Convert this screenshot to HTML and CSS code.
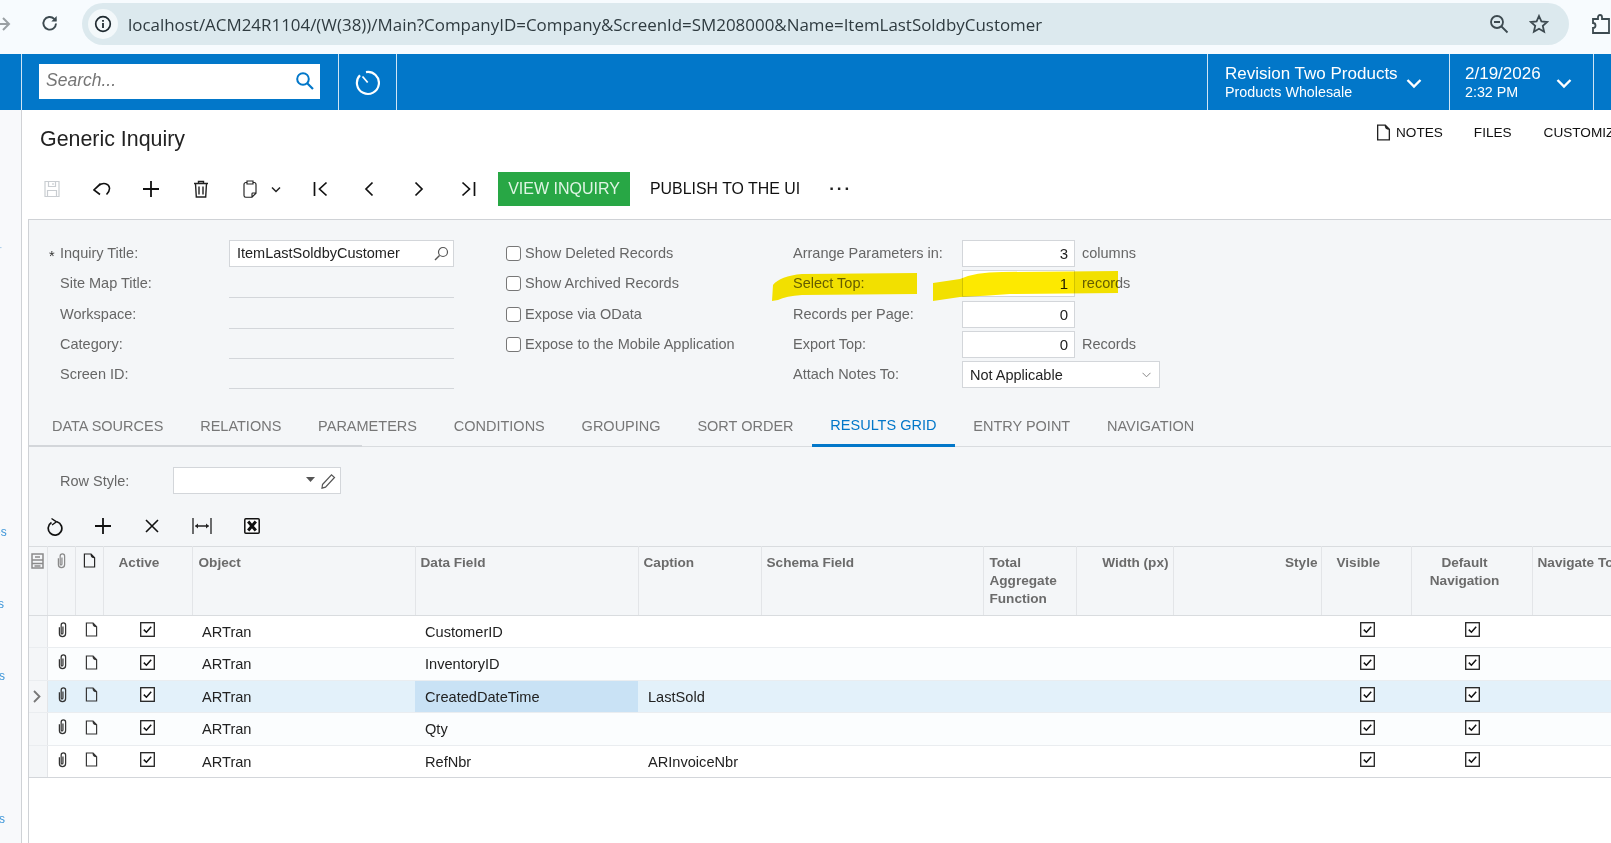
FILE: index.html
```html
<!DOCTYPE html>
<html lang="en">
<head>
<meta charset="utf-8">
<title>Generic Inquiry</title>
<link rel="stylesheet" href="styles.css">
</head>
<body>
<svg class="sprite" aria-hidden="true">
  <symbol id="i-clip" viewBox="0 0 12 18"><path d="M6.5 5v7.5a1 1 0 0 1-2 0V3.500a2.500 2.500 0 0 1 5 0V13a3.500 3.500 0 0 1-7 0V6" fill="none" stroke="currentColor" stroke-width="1.400"/></symbol>
  <symbol id="i-doc" viewBox="0 0 14 16"><path d="M1.500 1h7.200l3.800 4v10h-11zM8.700 1c0 2.500.5 4 3.800 4" fill="none" stroke="currentColor" stroke-width="1.250"/></symbol>
  <symbol id="i-check" viewBox="0 0 15 15"><rect x=".7" y=".7" width="13.600" height="13.600" fill="#fff" stroke="#222" stroke-width="1.300"/><path d="M3.800 7.600l2.600 2.600 4.800-5.400" fill="none" stroke="#111" stroke-width="1.500"/></symbol>
</svg>

<div class="chrome">
  <svg class="c-forward" width="14" height="16" viewBox="0 0 14 16"><path d="M0 8h11M5 2l6 6-6 6" fill="none" stroke="#9aa0a4" stroke-width="2"/></svg>
  <svg class="c-reload" width="20" height="20" viewBox="0 0 20 20"><path d="M16 10.500a6.300 6.300 0 1 1-1.800-4.600L16 7.600" fill="none" stroke="#3d4a50" stroke-width="1.900"/><path d="M16.700 3v5.400h-5.400z" fill="#3d4a50"/></svg>
  <div class="omnibox">
    <span class="site-info"><svg width="18" height="18" viewBox="0 0 18 18"><circle cx="9" cy="9" r="7.300" fill="none" stroke="#1f2a30" stroke-width="1.700"/><path d="M9 8v5M9 5v1.800" stroke="#1f2a30" stroke-width="1.800"/></svg></span>
    <span class="url">localhost/ACM24R1104/(W(38))/Main?CompanyID=Company&amp;ScreenId=SM208000&amp;Name=ItemLastSoldbyCustomer</span>
    <svg class="o-icon" width="20" height="20" viewBox="0 0 20 20"><circle cx="8" cy="8" r="6" fill="none" stroke="#3d4a50" stroke-width="1.800"/><path d="M5 8h6M12.500 12.500l6 6" stroke="#3d4a50" stroke-width="1.800"/></svg>
    <svg class="o-icon star" width="20" height="20" viewBox="0 0 20 20"><path d="M10 2l2.400 5.400 5.800.6-4.400 3.900 1.300 5.800L10 14.700l-5.100 3 1.300-5.800L1.800 8l5.800-.6z" fill="none" stroke="#3d4a50" stroke-width="1.800"/></svg>
  </div>
  <svg class="c-ext" width="20" height="22" viewBox="0 0 20 22"><path d="M2 6h5V4a2 2 0 0 1 4 0v2h7v14H2v-5a2.500 2.500 0 0 0 0-5z" fill="none" stroke="#3d4a50" stroke-width="1.800"/></svg>
</div>

<header class="topbar">
  <div class="tb-menu"></div>
  <div class="tb-search">
    <div class="searchbox">
      <span class="search-ph">Search...</span>
      <svg width="20" height="20" viewBox="0 0 20 20"><circle cx="8" cy="8" r="5.800" fill="none" stroke="#0277c9" stroke-width="2"/><path d="M12 12l6 6" stroke="#0277c9" stroke-width="2.200"/></svg>
    </div>
  </div>
  <div class="tb-timer">
    <svg width="26" height="26" viewBox="0 0 26 26"><path d="M6 5.300A11 11 0 1 0 12 2.100" fill="none" stroke="#fff" stroke-width="2.200"/><path d="M8.500 6.500l5.200 6" stroke="#fff" stroke-width="1.800"/></svg>
  </div>
  <div class="tb-fill"></div>
  <div class="tb-drop tb-company">
    <div class="tb-text"><div class="tb-big">Revision Two Products</div><div class="tb-small">Products Wholesale</div></div>
    <svg class="tb-chev" width="16" height="11" viewBox="0 0 16 11"><path d="M1.500 2l6.500 6.500L14.500 2" fill="none" stroke="#fff" stroke-width="2.400"/></svg>
  </div>
  <div class="tb-drop tb-date">
    <div class="tb-text"><div class="tb-big">2/19/2026</div><div class="tb-small">2:32 PM</div></div>
    <svg class="tb-chev" width="16" height="11" viewBox="0 0 16 11"><path d="M1.500 2l6.500 6.500L14.500 2" fill="none" stroke="#fff" stroke-width="2.400"/></svg>
  </div>
  <div class="tb-end"></div>
</header>

<div class="shell">
  <aside class="sidebar">
    <span class="side-mark">-</span>
    <span class="side-a">es</span>
    <span class="side-b">rs</span>
    <span class="side-c">s</span>
    <span class="side-d">s</span>
  </aside>
  <main class="main">
    <div class="pagehead">
      <h1 class="page-title">Generic Inquiry</h1>
      <div class="page-links">
        <span class="plink notes"><svg width="15" height="17" viewBox="0 0 14 16"><use href="#i-doc"/></svg>NOTES</span>
        <span class="plink files">FILES</span>
        <span class="plink">CUSTOMIZATION</span>
      </div>
    </div>

    <div class="toolbar">
      <svg class="t-save" width="16" height="18" viewBox="0 0 16 18"><path d="M1 1.500h14v15H1zM4.500 1.500v5h7v-5M9 3v2M3.500 16.500v-6h9v6" fill="none" stroke="#c9cdd1" stroke-width="1.200"/></svg>
      <svg class="t-undo" width="18" height="14" viewBox="0 0 18 14"><path d="M7.500 1.500L1 8l6 4.500M1.500 7.500L6 3.500C10 0 16 1.500 16.500 6c.3 3-1.500 5-3 6.500" fill="none" stroke="#111" stroke-width="1.600"/></svg>
      <svg class="t-plus" width="18" height="18" viewBox="0 0 18 18"><path d="M9 1v16M1 9h16" stroke="#111" stroke-width="1.800"/></svg>
      <svg class="t-trash" width="16" height="18" viewBox="0 0 16 18"><path d="M1 3.500h14M5.500 3.500V1.500h5v2M2.500 3.500l.8 13.500h9.400l.8-13.500M6 6.500v8M10 6.500v8" fill="none" stroke="#222" stroke-width="1.400"/></svg>
      <svg class="t-paste" width="14" height="18" viewBox="0 0 14 18"><path d="M4 2.500H3C1.800 2.500 1 3.300 1 4.500v11c0 1 .7 1.700 1.700 1.700H9l4-4V4.500c0-1.200-.8-2-2-2h-1M4 1h6v3H4zM13 13h-3.200c-.6 0-.8.300-.8.800V17" fill="none" stroke="#222" stroke-width="1.150"/></svg>
      <svg class="t-drop" width="10" height="7" viewBox="0 0 10 7"><path d="M1 1.500l4 4 4-4" fill="none" stroke="#222" stroke-width="1.500"/></svg>
      <svg class="t-first" width="15" height="16" viewBox="0 0 15 16"><path d="M1.500 1v14M13.500 1.500L6.500 8l7 6.500" fill="none" stroke="#111" stroke-width="1.700"/></svg>
      <svg class="t-prev" width="10" height="16" viewBox="0 0 10 16"><path d="M8.500 1.500L2 8l6.500 6.500" fill="none" stroke="#111" stroke-width="1.700"/></svg>
      <svg class="t-next" width="10" height="16" viewBox="0 0 10 16"><path d="M1.500 1.500L8 8l-6.500 6.500" fill="none" stroke="#111" stroke-width="1.700"/></svg>
      <svg class="t-last" width="15" height="16" viewBox="0 0 15 16"><path d="M13.500 1v14M1.500 1.500L8.500 8l-7 6.500" fill="none" stroke="#111" stroke-width="1.700"/></svg>
      <button class="btn-green" type="button">VIEW INQUIRY</button>
      <span class="t-publish">PUBLISH TO THE UI</span>
      <span class="t-more">···</span>
    </div>

    <section class="panel">
      <div class="form">
        <div class="col-a">
          <div class="frow"><label class="flabel req">Inquiry Title:</label><div class="input search-input"><span>ItemLastSoldbyCustomer</span><svg width="15" height="15" viewBox="0 0 15 15"><circle cx="9" cy="6" r="4.500" fill="none" stroke="#555" stroke-width="1.200"/><path d="M5.500 9.500L1 14" stroke="#555" stroke-width="1.500"/></svg></div></div>
          <div class="frow"><label class="flabel">Site Map Title:</label><div class="underline"></div></div>
          <div class="frow"><label class="flabel">Workspace:</label><div class="underline"></div></div>
          <div class="frow"><label class="flabel">Category:</label><div class="underline"></div></div>
          <div class="frow"><label class="flabel">Screen ID:</label><div class="underline"></div></div>
        </div>
        <div class="col-b">
          <div class="frow"><span class="cbox"></span><span class="clabel">Show Deleted Records</span></div>
          <div class="frow"><span class="cbox"></span><span class="clabel">Show Archived Records</span></div>
          <div class="frow"><span class="cbox"></span><span class="clabel">Expose via OData</span></div>
          <div class="frow"><span class="cbox"></span><span class="clabel">Expose to the Mobile Application</span></div>
        </div>
        <div class="col-c">
          <div class="frow"><label class="plabel">Arrange Parameters in:</label><div class="input num">3</div><span class="unit">columns</span></div>
          <div class="frow"><label class="plabel">Select Top:</label><div class="input num">1</div><span class="unit">records</span></div>
          <div class="frow"><label class="plabel">Records per Page:</label><div class="input num">0</div></div>
          <div class="frow"><label class="plabel">Export Top:</label><div class="input num">0</div><span class="unit">Records</span></div>
          <div class="frow"><label class="plabel">Attach Notes To:</label><div class="input select"><span>Not Applicable</span><svg width="9" height="6" viewBox="0 0 9 6"><path d="M.5.800l4 4 4-4" fill="none" stroke="#888" stroke-width="1"/></svg></div></div>
        </div>
      </div>

      <nav class="tabs">
        <span class="tab">DATA SOURCES</span>
        <span class="tab">RELATIONS</span>
        <span class="tab">PARAMETERS</span>
        <span class="tab">CONDITIONS</span>
        <span class="tab">GROUPING</span>
        <span class="tab">SORT ORDER</span>
        <span class="tab active">RESULTS GRID</span>
        <span class="tab">ENTRY POINT</span>
        <span class="tab">NAVIGATION</span>
      </nav>

      <div class="rowstyle">
        <label class="rs-label">Row Style:</label>
        <div class="input rs-input">
          <svg class="rs-caret" width="9" height="5" viewBox="0 0 9 5"><path d="M0 0h9L4.500 5z" fill="#555"/></svg>
          <svg width="15" height="16" viewBox="0 0 15 16"><path d="M1.500 11.500L10.500 1.800l3 2.700-9 9.700-3.500 1z" fill="none" stroke="#555" stroke-width="1.200"/></svg>
        </div>
      </div>

      <div class="gridbar">
        <svg class="g-refresh" width="16" height="19" viewBox="0 0 16 19"><path d="M4.500 5.500a6.800 6.800 0 1 0 5.500-.7" fill="none" stroke="#111" stroke-width="1.700"/><path d="M4.500 1.500L9.500 4.800 5 8" fill="none" stroke="#111" stroke-width="1.400"/></svg>
        <svg class="g-plus" width="16" height="16" viewBox="0 0 16 16"><path d="M8 0v16M0 8h16" stroke="#111" stroke-width="1.800"/></svg>
        <svg class="g-x" width="14" height="14" viewBox="0 0 14 14"><path d="M1 1l12 12M13 1L1 13" stroke="#111" stroke-width="1.600"/></svg>
        <svg class="g-fit" width="20" height="16" viewBox="0 0 20 16"><path d="M1 0v16M19 0v16M3.500 8h13" stroke="#222" stroke-width="1.300"/><path d="M3 8l3-2.500v5zM17 8l-3-2.500v5z" fill="#222"/></svg>
        <svg class="g-xl" width="16" height="16" viewBox="0 0 16 16"><rect x=".8" y=".8" width="14.400" height="14.400" rx="1" fill="#fff" stroke="#111" stroke-width="1.500"/><path d="M4.200 3.500l7.600 9M11.800 3.500l-7.600 9" stroke="#111" stroke-width="3"/></svg>
      </div>

      <table class="grid">
        <colgroup>
          <col class="w18"><col class="w28"><col class="w28"><col class="w89"><col class="w223"><col class="w222"><col class="w123"><col class="w222b"><col class="w93"><col class="w97"><col class="w148"><col class="w90"><col class="w121"><col class="wrest">
        </colgroup>
        <thead>
          <tr>
            <th class="ic"><svg width="13" height="16" viewBox="0 0 13 16"><path d="M1 1h11v14H1zM1 7h11M1 10.500h11M4 4h5M3.500 13h6" fill="none" stroke="#8a8a8a" stroke-width="1.500"/></svg></th>
            <th class="ic"><svg class="muted" width="11" height="16"><use href="#i-clip"/></svg></th>
            <th class="ic"><svg class="dark" width="13" height="15"><use href="#i-doc"/></svg></th>
            <th class="pad16">Active</th>
            <th class="objcol">Object</th>
            <th>Data Field</th>
            <th>Caption</th>
            <th>Schema Field</th>
            <th class="totcol">Total<br>Aggregate<br>Function</th>
            <th class="right">Width (px)</th>
            <th class="right stylecol">Style</th>
            <th class="pad16">Visible</th>
            <th class="navcol">Default<br>Navigation</th>
            <th class="clip">Navigate To</th>
          </tr>
        </thead>
        <tbody>
          <tr>
            <td class="rowhd"></td><td class="ic"><svg width="11" height="16"><use href="#i-clip"/></svg></td><td class="ic doc"><svg width="13" height="15"><use href="#i-doc"/></svg></td><td class="cc"><svg width="15" height="15"><use href="#i-check"/></svg></td><td>ARTran</td><td>CustomerID</td><td></td><td></td><td></td><td></td><td></td><td class="cc cr"><svg width="15" height="15"><use href="#i-check"/></svg></td><td class="cc cr"><svg width="15" height="15"><use href="#i-check"/></svg></td><td></td>
          </tr>
          <tr>
            <td class="rowhd"></td><td class="ic"><svg width="11" height="16"><use href="#i-clip"/></svg></td><td class="ic doc"><svg width="13" height="15"><use href="#i-doc"/></svg></td><td class="cc"><svg width="15" height="15"><use href="#i-check"/></svg></td><td>ARTran</td><td>InventoryID</td><td></td><td></td><td></td><td></td><td></td><td class="cc cr"><svg width="15" height="15"><use href="#i-check"/></svg></td><td class="cc cr"><svg width="15" height="15"><use href="#i-check"/></svg></td><td></td>
          </tr>
          <tr class="sel">
            <td class="rowhd"><svg width="8" height="13" viewBox="0 0 8 13"><path d="M1 1l5.500 5.500L1 12" fill="none" stroke="#777" stroke-width="1.800"/></svg></td><td class="ic"><svg width="11" height="16"><use href="#i-clip"/></svg></td><td class="ic doc"><svg width="13" height="15"><use href="#i-doc"/></svg></td><td class="cc"><svg width="15" height="15"><use href="#i-check"/></svg></td><td>ARTran</td><td class="cur">CreatedDateTime</td><td>LastSold</td><td></td><td></td><td></td><td></td><td class="cc cr"><svg width="15" height="15"><use href="#i-check"/></svg></td><td class="cc cr"><svg width="15" height="15"><use href="#i-check"/></svg></td><td></td>
          </tr>
          <tr>
            <td class="rowhd"></td><td class="ic"><svg width="11" height="16"><use href="#i-clip"/></svg></td><td class="ic doc"><svg width="13" height="15"><use href="#i-doc"/></svg></td><td class="cc"><svg width="15" height="15"><use href="#i-check"/></svg></td><td>ARTran</td><td>Qty</td><td></td><td></td><td></td><td></td><td></td><td class="cc cr"><svg width="15" height="15"><use href="#i-check"/></svg></td><td class="cc cr"><svg width="15" height="15"><use href="#i-check"/></svg></td><td></td>
          </tr>
          <tr>
            <td class="rowhd"></td><td class="ic"><svg width="11" height="16"><use href="#i-clip"/></svg></td><td class="ic doc"><svg width="13" height="15"><use href="#i-doc"/></svg></td><td class="cc"><svg width="15" height="15"><use href="#i-check"/></svg></td><td>ARTran</td><td>RefNbr</td><td>ARInvoiceNbr</td><td></td><td></td><td></td><td></td><td class="cc cr"><svg width="15" height="15"><use href="#i-check"/></svg></td><td class="cc cr"><svg width="15" height="15"><use href="#i-check"/></svg></td><td></td>
          </tr>
        </tbody>
      </table>
      <div class="grid-rest"></div>
    </section>
  </main>
</div>

<svg class="marker" width="1611" height="843" viewBox="0 0 1611 843" aria-hidden="true">
  <path d="M772 301L773 285Q780 276 802 274L917 273V294L802 295Q786 296 778 300Z" fill="#fde900"/>
  <path d="M933 283L960 279Q975 272 1002 272L1118 271V293L1010 294Q985 296 960 297L933 301Z" fill="#fde900"/>
</svg>
</body>
</html>
```
FILE: styles.css
```css
* { box-sizing: border-box; }
html, body { margin: 0; padding: 0; }
body {
  width: 1611px;
  height: 843px;
  overflow: hidden;
  background: #fff;
  font-family: "Liberation Sans", Arial, sans-serif;
  font-size: 14.5px;
  color: #222;
  position: relative;
}
.sprite { position: absolute; width: 0; height: 0; }
svg { display: block; flex: none; }

/* Browser chrome */
.chrome {
  height: 54px;
  background: #f7fbfe;
  display: flex;
  align-items: flex-start;
  overflow: hidden;
}
.c-forward { margin: 16px 0 0 -2px; }
.c-reload { margin: 13px 0 0 28px; }
.omnibox {
  width: 1489px;
  height: 42px;
  margin: 3px 0 0 22px;
  background: #dce9ee;
  border-radius: 21px;
  display: flex;
  align-items: center;
  padding: 0 20px 0 6px;
}
.site-info {
  width: 30px;
  height: 30px;
  border-radius: 50%;
  background: #f3f8fa;
  display: flex;
  align-items: center;
  justify-content: center;
}
.url {
  flex: 1;
  margin-left: 10px;
  font-family: "Open Sans", "Noto Sans", sans-serif;
  font-size: 16.93px;
  color: #2f3b40;
  white-space: nowrap;
}
.o-icon.star { margin-left: 20px; }
.c-ext { margin: 13px 0 0 22px; }

/* Blue top bar */
.topbar {
  height: 56px;
  background: #0277c9;
  display: flex;
  color: #fff;
}
.tb-menu { width: 22px; border-right: 1px solid #cfe5f5; }
.tb-search {
  width: 317px;
  padding: 10px 0 0 17px;
  border-right: 1px solid #cfe5f5;
}
.searchbox {
  width: 281px;
  height: 35px;
  background: #fff;
  display: flex;
  align-items: center;
  justify-content: space-between;
  padding: 0 5px 2px 7px;
}
.search-ph { font-style: italic; font-size: 17.5px; color: #757575; }
.tb-timer {
  width: 58px;
  border-right: 1px solid #cfe5f5;
  display: flex;
  align-items: center;
  justify-content: center;
  padding: 2px 2px 0 0;
}
.tb-fill { flex: 1; }
.tb-drop {
  display: flex;
  align-items: center;
  border-left: 1px solid #cfe5f5;
  position: relative;
}
.tb-company { width: 242px; padding-left: 17px; }
.tb-date { width: 144px; padding-left: 15px; }
.tb-text { width: 181px; }
.tb-date .tb-text { width: 91px; }
.tb-big { font-size: 17px; line-height: 20px; }
.tb-small { font-size: 14.3px; line-height: 17px; }
.tb-chev { margin-top: 3px; }
.tb-end { width: 18px; border-left: 1px solid #cfe5f5; }

/* Shell */
.shell { display: flex; height: 733px; overflow: hidden; }
.sidebar {
  width: 22px;
  flex: none;
  background: #f8f9fb;
  border-right: 1px solid #cfd2d6;
  color: #3a94d8;
  font-size: 12px;
  line-height: 14px;
  display: flex;
  flex-direction: column;
  align-items: flex-start;
  overflow: hidden;
}
.side-mark { margin-top: 130px; margin-left: -2px; height: 14px; color: #a9cdea; }
.side-a { margin-top: 271px; margin-left: -6px; }
.side-b { margin-top: 58px; margin-left: -6px; }
.side-c { margin-top: 58px; margin-left: -1px; }
.side-d { margin-top: 129px; margin-left: -1px; }
.main { flex: 1; min-width: 0; position: relative; }

/* Page header */
.pagehead {
  height: 48px;
  display: flex;
  justify-content: space-between;
  padding-left: 18px;
}
.page-title {
  margin: 16px 0 0;
  font-size: 21.4px;
  line-height: 26px;
  font-weight: 400;
  color: #222;
}
.page-links {
  display: flex;
  width: 259px;
  overflow: hidden;
  white-space: nowrap;
  color: #111;
  font-size: 13.6px;
  padding-top: 14px;
  line-height: 17px;
  margin-right: -24px;
}
.plink { flex: none; display: inline-flex; }
.plink svg { margin-right: 5px; color: #222; }
.notes { margin-right: 31px; }
.files { margin-right: 32px; }

/* Toolbar */
.toolbar {
  height: 34px;
  margin-top: 14px;
  display: flex;
  align-items: center;
  position: relative;
  padding-left: 22px;
}
.t-undo { margin-left: 33px; }
.t-plus { margin-left: 31px; }
.t-trash { margin-left: 33px; }
.t-paste { margin-left: 34px; }
.t-drop { margin-left: 14px; }
.t-first { margin-left: 32px; }
.t-prev { margin-left: 36px; }
.t-next { margin-left: 40px; }
.t-last { margin-left: 37px; }
.btn-green {
  margin-left: 22px;
  width: 132px;
  height: 34px;
  border: 0;
  padding: 0;
  background: #28a745;
  color: #dff5e4;
  font: 16px "Liberation Sans", Arial, sans-serif;
}
.t-publish { margin-left: 20px; font-size: 15.9px; color: #111; }
.t-more { margin-left: 29px; font-size: 17px; letter-spacing: 2px; color: #222; font-weight: 700; }

/* Panel */
.panel {
  margin: 13px 0 0 6px;
  height: 624px;
  background: #f4f6f8;
  border-top: 1px solid #cfd2d6;
  border-left: 1px solid #cfd2d6;
  padding-top: 18px;
  display: flex;
  flex-direction: column;
}
.form { display: flex; height: 167px; flex: none; }
.frow { height: 30.25px; display: flex; align-items: center; }
.col-a { width: 477px; }
.col-b { width: 287px; }
.col-c { flex: 1; }
.col-c .frow + .frow .input { margin-top: 1px; }
.col-b .frow + .frow .cbox { margin-top: 1px; }
.flabel {
  width: 200px;
  padding-left: 31px;
  color: #666;
  position: relative;
}
.flabel.req::before {
  content: "*";
  position: absolute;
  left: 20px;
  top: 3px;
  color: #333;
}
.input {
  background: #fff;
  border: 1px solid #d3d6da;
  height: 27px;
  font-size: 14.5px;
  color: #222;
  display: flex;
  align-items: center;
}
.search-input { width: 225px; justify-content: space-between; padding: 0 4px 0 7px; }
.underline {
  width: 225px;
  height: 27px;
  margin-top: 3px;
  border-bottom: 1px solid #d3d6da;
}
.cbox {
  width: 15px;
  height: 15px;
  border: 1px solid #777;
  border-radius: 3px;
  background: #fff;
  margin-right: 4px;
}
.clabel { color: #666; }
.plabel { width: 169px; color: #666; }
.num { width: 113px; justify-content: flex-end; padding-right: 6px; font-size: 15px; }
.unit { margin-left: 7px; color: #666; }
.select { width: 198px; justify-content: space-between; padding: 0 8px 0 7px; }

/* Tabs */
.tabs {
  height: 42px;
  flex: none;
  display: flex;
  padding-left: 4.5px;
  border-bottom: 1px solid #d9dcdf;
  position: relative;
}
.tabs::after {
  content: "";
  position: absolute;
  left: 0;
  bottom: -1px;
  width: 333px;
  height: 2px;
  background: #d3d6da;
}
.tab {
  padding: 0 18.42px;
  line-height: 42px;
  height: 42px;
  font-size: 14.5px;
  color: #777;
  white-space: nowrap;
}
.tab.active {
  color: #0277c9;
  border-bottom: 3px solid #0277c9;
  line-height: 40px;
}

/* Row style */
.rowstyle {
  height: 27px;
  flex: none;
  margin-top: 20px;
  display: flex;
  align-items: center;
}
.rs-label { width: 144px; padding-left: 31px; color: #666; }
.rs-input { width: 168px; justify-content: flex-end; padding-right: 4px; }
.rs-caret { margin-right: 6px; margin-bottom: 2px; }

/* Grid toolbar */
.gridbar {
  height: 20px;
  flex: none;
  margin-top: 22px;
  display: flex;
  align-items: center;
  padding-left: 18px;
}
.g-plus { margin-left: 32px; }
.g-x { margin-left: 34px; }
.g-fit { margin-left: 33px; }
.g-xl { margin-left: 32px; }

/* Grid */
.grid {
  flex: none;
  table-layout: fixed;
  border-collapse: collapse;
  width: 1582px;
  margin-top: 10px;
  border-top: 1px solid #d9dcdf;
  background: #fff;
}
.grid-rest { flex: 1; background: #fff; }
.w18 { width: 18px; }
.w28 { width: 28px; }
.w89 { width: 89px; }
.w90 { width: 90px; }
.w223 { width: 223px; }
.w222 { width: 223px; }
.w123 { width: 123px; }
.w222b { width: 222px; }
.w93 { width: 93px; }
.w97 { width: 97px; }
.w148 { width: 148px; }
.w121 { width: 121px; }
.grid th {
  height: 69px;
  background: #f4f6f8;
  border-right: 1px solid #e3e5e8;
  border-bottom: 1px solid #d9dcdf;
  vertical-align: top;
  text-align: left;
  padding: 7px 4px 0 5px;
  font-size: 13.6px;
  line-height: 18px;
  font-weight: 700;
  color: #6b6b6b;
  white-space: nowrap;
  overflow: hidden;
}
.grid th.ic { padding: 6px 0 0; }
.grid th.ic svg { margin: 0 auto; }
.grid th.pad16 { padding-left: 15px; }
.grid th.objcol { padding-left: 6px; }
.grid th.totcol { padding-left: 6px; }
.grid th.right { text-align: right; }
.grid th.stylecol { padding-right: 3px; }
.grid th.navcol { text-align: center; padding: 7px 14px 0 0; }
.grid th.clip { border-right: 0; }
.muted { color: #8a8a8a; }
.dark { color: #222; }
.grid td {
  height: 32px;
  padding: 0 0 0 10px;
  font-size: 14.6px;
  color: #222;
  vertical-align: middle;
  border-bottom: 1px solid #eaedf0;
}
.grid tbody tr:nth-child(even) td { height: 33px; background: #fbfdfe; }
.grid tbody tr:nth-child(4) td { background: #fbfdfe; }
.grid tbody tr:last-child td { border-bottom: 1px solid #d3d6da; }
.grid td.rowhd, .grid tbody tr:nth-child(even) td.rowhd {
  background: #f4f6f8;
  padding: 0 0 0 4px;
  border-right: 1px solid #e3e5e8;
}
.grid td.ic { padding: 0 0 4px; color: #333; }
.grid td.ic svg { margin: 0 auto; position: relative; left: 1px; }
.grid td.doc { padding-left: 2px; }
.grid td.cc { padding: 0 0 4px; }
.grid td.cr { padding-left: 2px; }
.grid td.cc svg { margin: 0 auto; }
.grid tr.sel td { background: #e3f1fa; }
.grid tr.sel td.rowhd { background: #f4f6f8; }
.grid tr.sel td.cur { background: #c9e2f5; }

/* Hand-drawn marker over the form */
.marker {
  position: absolute;
  left: 0;
  top: 0;
  pointer-events: none;
  mix-blend-mode: multiply;
}
```
